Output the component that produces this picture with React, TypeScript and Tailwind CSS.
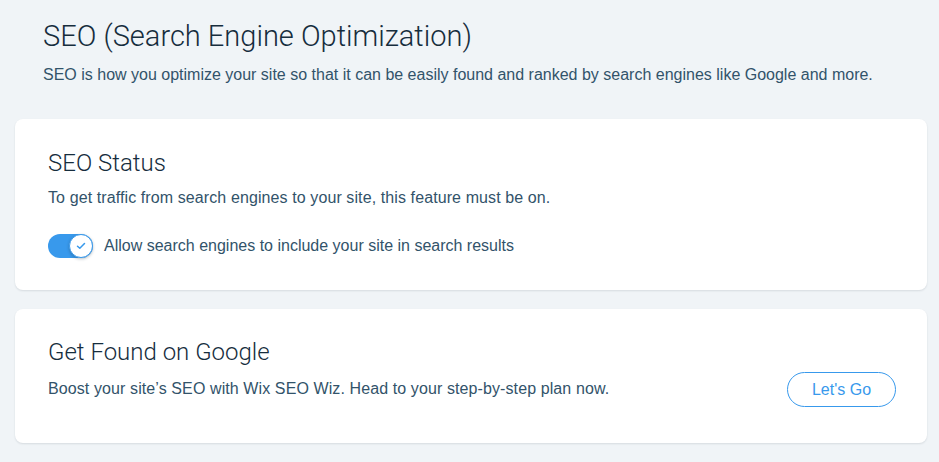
import React, { useState } from 'react';

const font = { fontFamily: '"Liberation Sans", Arial, sans-serif' };
const light = { fontFamily: 'Roboto, "Liberation Sans", Arial, sans-serif' };

const Toggle: React.FC<{ on: boolean; onChange: () => void }> = ({ on, onChange }) => (
  <button
    onClick={onChange}
    className={`relative h-[24px] w-[45px] rounded-full shrink-0 ${on ? 'bg-[#3899ec]' : 'bg-[#dfe5eb]'}`}
    aria-label="Toggle SEO"
  >
    <span
      className={`absolute top-0 flex h-[24px] w-[24px] items-center justify-center rounded-full border border-[#3899ec] bg-white shadow-[0_1px_3px_rgba(22,45,61,0.3)] ${on ? 'right-0' : 'left-0'}`}
    >
      <svg width="10" height="8" viewBox="0 0 10 8" fill="none">
        <path d="M1.5 4.2 L3.8 6.3 L8.5 1.5" stroke="#3899ec" strokeWidth="1.5" strokeLinecap="round" strokeLinejoin="round" />
      </svg>
    </span>
  </button>
);

export default function App() {
  const [seoOn, setSeoOn] = useState(true);

  return (
    <div className="min-h-[462px] w-full bg-[#f0f4f7] pl-[15px] pr-[12px] pt-[20px] pb-[19px]" style={font}>
      <div className="px-[28px]">
        <h1 className="text-[29px] leading-[32px] font-light text-[#162d3d]" style={light}>
          SEO (Search Engine Optimization)
        </h1>
        <p className="mt-[13px] text-[16px] leading-[20px] text-[#32536a]">
          SEO is how you optimize your site so that it can be easily found and ranked by search engines like Google and more.
        </p>
      </div>

      <div className="mt-[34px] flex flex-col gap-[19px]">
        <div className="h-[171px] rounded-[8px] bg-white px-[33px] pt-[30px] shadow-[0_1px_2px_rgba(22,45,61,0.12)]">
          <h2 className="text-[24px] leading-[28px] font-light text-[#162d3d]" style={light}>SEO Status</h2>
          <p className="mt-[11px] text-[16px] leading-[20px] tracking-[0.1px] text-[#32536a]">
            To get traffic from search engines to your site, this feature must be on.
          </p>
          <div className="mt-[26px] flex items-center gap-[11px]">
            <Toggle on={seoOn} onChange={() => setSeoOn(!seoOn)} />
            <span className="text-[16px] leading-[20px] text-[#32536a]">
              Allow search engines to include your site in search results
            </span>
          </div>
        </div>

        <div className="flex h-[134px] items-start justify-between rounded-[8px] bg-white pl-[33px] pr-[31px] pt-[29px] shadow-[0_1px_2px_rgba(22,45,61,0.12)]">
          <div>
            <h2 className="text-[24px] leading-[28px] font-light text-[#162d3d]" style={light}>Get Found on Google</h2>
            <p className="mt-[13px] text-[16px] leading-[20px] tracking-[0.1px] text-[#32536a]">
              Boost your site’s SEO with Wix SEO Wiz. Head to your step-by-step plan now.
            </p>
          </div>
          <button className="mt-[34px] h-[35px] w-[109px] rounded-full border border-[#3899ec] bg-white text-[16px] text-[#3899ec]">
            Let's Go
          </button>
        </div>
      </div>
    </div>
  );
}
